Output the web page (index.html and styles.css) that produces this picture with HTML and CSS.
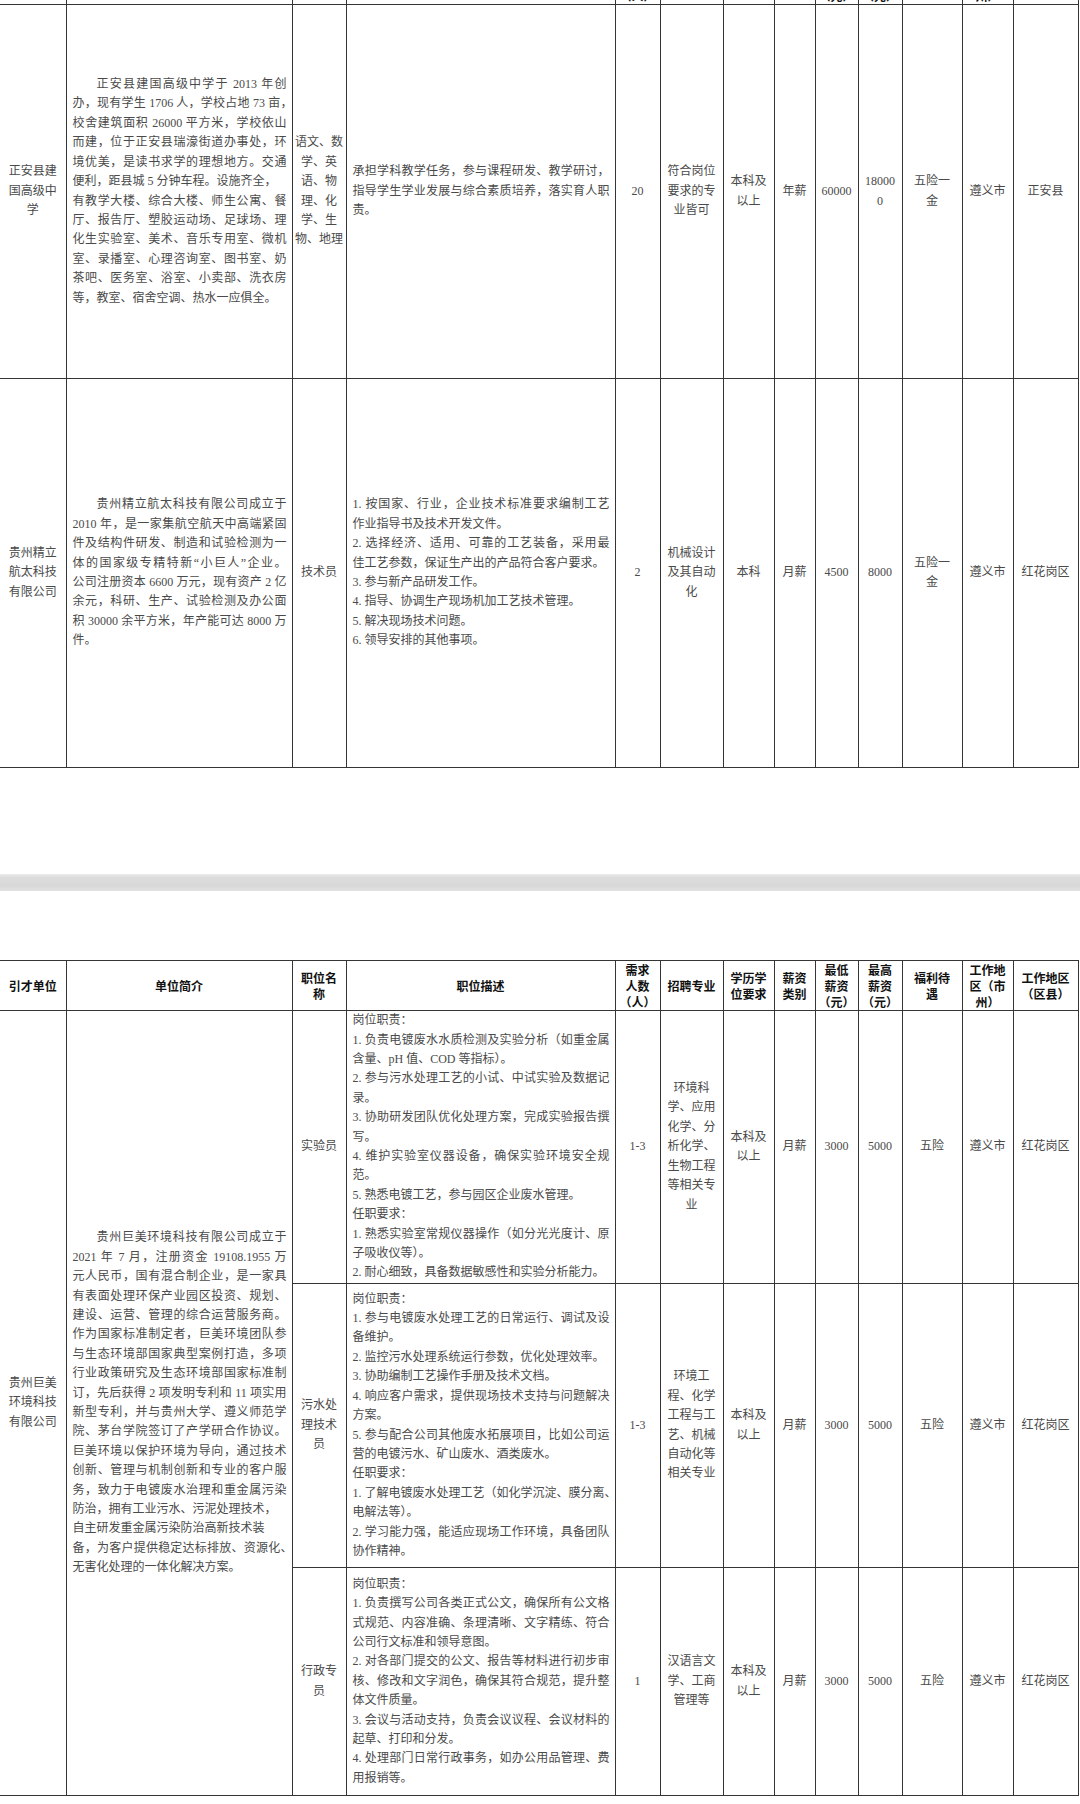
FILE: index.html
```html
<!DOCTYPE html>
<html lang="zh-CN">
<head>
<meta charset="utf-8">
<title>引才岗位表</title>
<link rel="stylesheet" href="styles.css">
</head>
<body>
<table class="sheet top">
  <colgroup>
    <col class="w1"><col class="w2"><col class="w3"><col class="w4"><col class="w5"><col class="w6"><col class="w7"><col class="w8"><col class="w9"><col class="w10"><col class="w11"><col class="w12"><col class="w13">
  </colgroup>
  <thead>
    <tr class="hd">
      <th class="first">引才单位</th><th>单位简介</th><th>职位名<br>称</th><th>职位描述</th><th>需求<br>人数<br>（人）</th><th>招聘专业</th><th>学历学<br>位要求</th><th>薪资<br>类别</th><th>最低<br>薪资<br>（元）</th><th>最高<br>薪资<br>（元）</th><th>福利待<br>遇</th><th>工作地<br>区（市<br>州）</th><th>工作地区<br>（区县）</th>
    </tr>
  </thead>
  <tbody>
    <tr class="ra">
      <td class="first">正安县建<br>国高级中<br>学</td>
      <td class="txt ind">
        <span class="j">正安县建国高级中学于 2013 年创</span>
        <span class="j">办，现有学生 1706 人，学校占地 73 亩<span class="h">，</span></span>
        <span class="j">校舍建筑面积 26000 平方米，学校依山</span>
        <span class="j">而建，位于正安县瑞濠街道办事处，环</span>
        <span class="j">境优美，是读书求学的理想地方。交通</span>
        <span class="l">便利，距县城 5 分钟车程。设施齐全，</span>
        <span class="j">有教学大楼、综合大楼、师生公寓、餐</span>
        <span class="j">厅、报告厅、塑胶运动场、足球场、理</span>
        <span class="j">化生实验室、美术、音乐专用室、微机</span>
        <span class="j">室、录播室、心理咨询室、图书室、奶</span>
        <span class="j">茶吧、医务室、浴室、小卖部、洗衣房</span>
        <span class="l">等，教室、宿舍空调、热水一应俱全。</span>
      </td>
      <td>语文、数<br>学、英<br>语、物<br>理、化<br>学、生<br>物、地理</td>
      <td class="txt">
        <span class="j">承担学科教学任务，参与课程研发、教学研讨，</span>
        <span class="j">指导学生学业发展与综合素质培养，落实育人职</span>
        <span class="l">责。</span>
      </td>
      <td>20</td>
      <td>符合岗位<br>要求的专<br>业皆可</td>
      <td>本科及<br>以上</td>
      <td>年薪</td>
      <td>60000</td>
      <td>18000<br>0</td>
      <td>五险一<br>金</td>
      <td>遵义市</td>
      <td>正安县</td>
    </tr>
    <tr class="rb">
      <td class="first">贵州精立<br>航太科技<br>有限公司</td>
      <td class="txt ind">
        <span class="j">贵州精立航太科技有限公司成立于</span>
        <span class="j">2010 年，是一家集航空航天中高端紧固</span>
        <span class="j">件及结构件研发、制造和试验检测为一</span>
        <span class="j">体的国家级专精特新“小巨人”企业。</span>
        <span class="j">公司注册资本 6600 万元，现有资产 2 亿</span>
        <span class="j">余元，科研、生产、试验检测及办公面</span>
        <span class="j">积 30000 余平方米，年产能可达 8000 万</span>
        <span class="l">件。</span>
      </td>
      <td>技术员</td>
      <td class="txt">
        <span class="j">1. 按国家、行业，企业技术标准要求编制工艺</span>
        <span class="l">作业指导书及技术开发文件。</span>
        <span class="j">2. 选择经济、适用、可靠的工艺装备，采用最</span>
        <span class="l">佳工艺参数，保证生产出的产品符合客户要求。</span>
        <span class="l">3. 参与新产品研发工作。</span>
        <span class="l">4. 指导、协调生产现场机加工艺技术管理。</span>
        <span class="l">5. 解决现场技术问题。</span>
        <span class="l">6. 领导安排的其他事项。</span>
      </td>
      <td>2</td>
      <td>机械设计<br>及其自动<br>化</td>
      <td>本科</td>
      <td>月薪</td>
      <td>4500</td>
      <td>8000</td>
      <td>五险一<br>金</td>
      <td>遵义市</td>
      <td>红花岗区</td>
    </tr>
  </tbody>
</table>

<div class="band"></div>

<table class="sheet bottom">
  <colgroup>
    <col class="w1"><col class="w2"><col class="w3"><col class="w4"><col class="w5"><col class="w6"><col class="w7"><col class="w8"><col class="w9"><col class="w10"><col class="w11"><col class="w12"><col class="w13">
  </colgroup>
  <thead>
    <tr class="hd">
      <th class="first">引才单位</th><th>单位简介</th><th>职位名<br>称</th><th>职位描述</th><th>需求<br>人数<br>（人）</th><th>招聘专业</th><th>学历学<br>位要求</th><th>薪资<br>类别</th><th>最低<br>薪资<br>（元）</th><th>最高<br>薪资<br>（元）</th><th>福利待<br>遇</th><th>工作地<br>区（市<br>州）</th><th>工作地区<br>（区县）</th>
    </tr>
  </thead>
  <tbody>
    <tr class="r1">
      <td class="first" rowspan="3">贵州巨美<br>环境科技<br>有限公司</td>
      <td class="txt ind" rowspan="3">
        <span class="j">贵州巨美环境科技有限公司成立于</span>
        <span class="j">2021 年 7 月，注册资金 19108.1955 万</span>
        <span class="j">元人民币，国有混合制企业，是一家具</span>
        <span class="j">有表面处理环保产业园区投资、规划、</span>
        <span class="j">建设、运营、管理的综合运营服务商。</span>
        <span class="j">作为国家标准制定者，巨美环境团队参</span>
        <span class="j">与生态环境部国家典型案例打造，多项</span>
        <span class="j">行业政策研究及生态环境部国家标准制</span>
        <span class="j">订，先后获得 2 项发明专利和 11 项实用</span>
        <span class="j">新型专利，并与贵州大学、遵义师范学</span>
        <span class="j">院、茅台学院签订了产学研合作协议。</span>
        <span class="j">巨美环境以保护环境为导向，通过技术</span>
        <span class="j">创新、管理与机制创新和专业的客户服</span>
        <span class="j">务，致力于电镀废水治理和重金属污染</span>
        <span class="l">防治，拥有工业污水、污泥处理技术，</span>
        <span class="l">自主研发重金属污染防治高新技术装</span>
        <span class="j">备，为客户提供稳定达标排放、资源化<span class="h">、</span></span>
        <span class="l">无害化处理的一体化解决方案。</span>
      </td>
      <td>实验员</td>
      <td class="txt">
        <span class="l">岗位职责：</span>
        <span class="j">1. 负责电镀废水水质检测及实验分析（如重金属</span>
        <span class="l">含量、pH 值、COD 等指标）。</span>
        <span class="j">2. 参与污水处理工艺的小试、中试实验及数据记</span>
        <span class="l">录。</span>
        <span class="j">3. 协助研发团队优化处理方案，完成实验报告撰</span>
        <span class="l">写。</span>
        <span class="j">4. 维护实验室仪器设备，确保实验环境安全规</span>
        <span class="l">范。</span>
        <span class="l">5. 熟悉电镀工艺，参与园区企业废水管理。</span>
        <span class="l">任职要求：</span>
        <span class="j">1. 熟悉实验室常规仪器操作（如分光光度计、原</span>
        <span class="l">子吸收仪等）。</span>
        <span class="l">2. 耐心细致，具备数据敏感性和实验分析能力。</span>
      </td>
      <td>1-3</td>
      <td>环境科<br>学、应用<br>化学、分<br>析化学、<br>生物工程<br>等相关专<br>业</td>
      <td>本科及<br>以上</td>
      <td>月薪</td>
      <td>3000</td>
      <td>5000</td>
      <td>五险</td>
      <td>遵义市</td>
      <td>红花岗区</td>
    </tr>
    <tr class="r2">
      <td>污水处<br>理技术<br>员</td>
      <td class="txt">
        <span class="l">岗位职责：</span>
        <span class="j">1. 参与电镀废水处理工艺的日常运行、调试及设</span>
        <span class="l">备维护。</span>
        <span class="l">2. 监控污水处理系统运行参数，优化处理效率。</span>
        <span class="l">3. 协助编制工艺操作手册及技术文档。</span>
        <span class="j">4. 响应客户需求，提供现场技术支持与问题解决</span>
        <span class="l">方案。</span>
        <span class="j">5. 参与配合公司其他废水拓展项目，比如公司运</span>
        <span class="l">营的电镀污水、矿山废水、酒类废水。</span>
        <span class="l">任职要求：</span>
        <span class="j">1. 了解电镀废水处理工艺（如化学沉淀、膜分离<span class="h">、</span></span>
        <span class="l">电解法等）。</span>
        <span class="j">2. 学习能力强，能适应现场工作环境，具备团队</span>
        <span class="l">协作精神。</span>
      </td>
      <td>1-3</td>
      <td>环境工<br>程、化学<br>工程与工<br>艺、机械<br>自动化等<br>相关专业</td>
      <td>本科及<br>以上</td>
      <td>月薪</td>
      <td>3000</td>
      <td>5000</td>
      <td>五险</td>
      <td>遵义市</td>
      <td>红花岗区</td>
    </tr>
    <tr class="r3">
      <td>行政专<br>员</td>
      <td class="txt">
        <span class="l">岗位职责：</span>
        <span class="j">1. 负责撰写公司各类正式公文，确保所有公文格</span>
        <span class="j">式规范、内容准确、条理清晰、文字精练、符合</span>
        <span class="l">公司行文标准和领导意图。</span>
        <span class="j">2. 对各部门提交的公文、报告等材料进行初步审</span>
        <span class="j">核、修改和文字润色，确保其符合规范，提升整</span>
        <span class="l">体文件质量。</span>
        <span class="j">3. 会议与活动支持，负责会议议程、会议材料的</span>
        <span class="l">起草、打印和分发。</span>
        <span class="j">4. 处理部门日常行政事务，如办公用品管理、费</span>
        <span class="l">用报销等。</span>
      </td>
      <td>1</td>
      <td>汉语言文<br>学、工商<br>管理等</td>
      <td>本科及<br>以上</td>
      <td>月薪</td>
      <td>3000</td>
      <td>5000</td>
      <td>五险</td>
      <td>遵义市</td>
      <td>红花岗区</td>
    </tr>
  </tbody>
</table>
</body>
</html>
```

FILE: styles.css
```css
html, body {
  margin: 0;
  padding: 0;
  background: #ffffff;
}

body {
  width: 1080px;
  overflow: hidden;
  font-family: "Liberation Serif", "Noto Sans CJK SC", serif;
  font-size: 12px;
  color: #4a4a4a;
}

.sheet {
  border-collapse: collapse;
  table-layout: fixed;
  width: 1078px;
}

.sheet.top {
  margin-top: -46px;
}

.w1 { width: 66px; }
.w2 { width: 226px; }
.w3 { width: 54px; }
.w4 { width: 269px; }
.w5 { width: 45px; }
.w6 { width: 63px; }
.w7 { width: 51px; }
.w8 { width: 41px; }
.w9 { width: 43px; }
.w10 { width: 44px; }
.w11 { width: 60px; }
.w12 { width: 51px; }
.w13 { width: 65px; }

.sheet th,
.sheet td {
  border: 1px solid #353535;
  padding: 0 2px;
  text-align: center;
  vertical-align: middle;
  white-space: nowrap;
  line-height: 19.4px;
}

.sheet th {
  font-family: "Noto Sans CJK SC", sans-serif;
  font-weight: 700;
  color: #111111;
  line-height: 16px;
}

.sheet .first {
  border-left: none;
}

.hd { height: 50px; }
.ra { height: 374px; }
.rb { height: 389px; }
.r1 { height: 273px; }
.r2 { height: 284px; }
.r3 { height: 228px; }

.sheet td.txt {
  text-align: left;
  padding: 0 5px 0 6px;
}

.txt .j,
.txt .l {
  display: block;
  white-space: nowrap;
}

.txt .j {
  text-align: justify;
  text-align-last: justify;
}

.txt .l {
  text-align: left;
}

.ind > :first-child {
  text-indent: 2em;
}

.h {
  font-feature-settings: "halt";
}

.band {
  height: 17px;
  margin: 106px 0 69px;
  background: linear-gradient(#ececec 0%, #dcdcdc 20%, #d8d8d8 70%, #e2e2e2 100%);
}
```
